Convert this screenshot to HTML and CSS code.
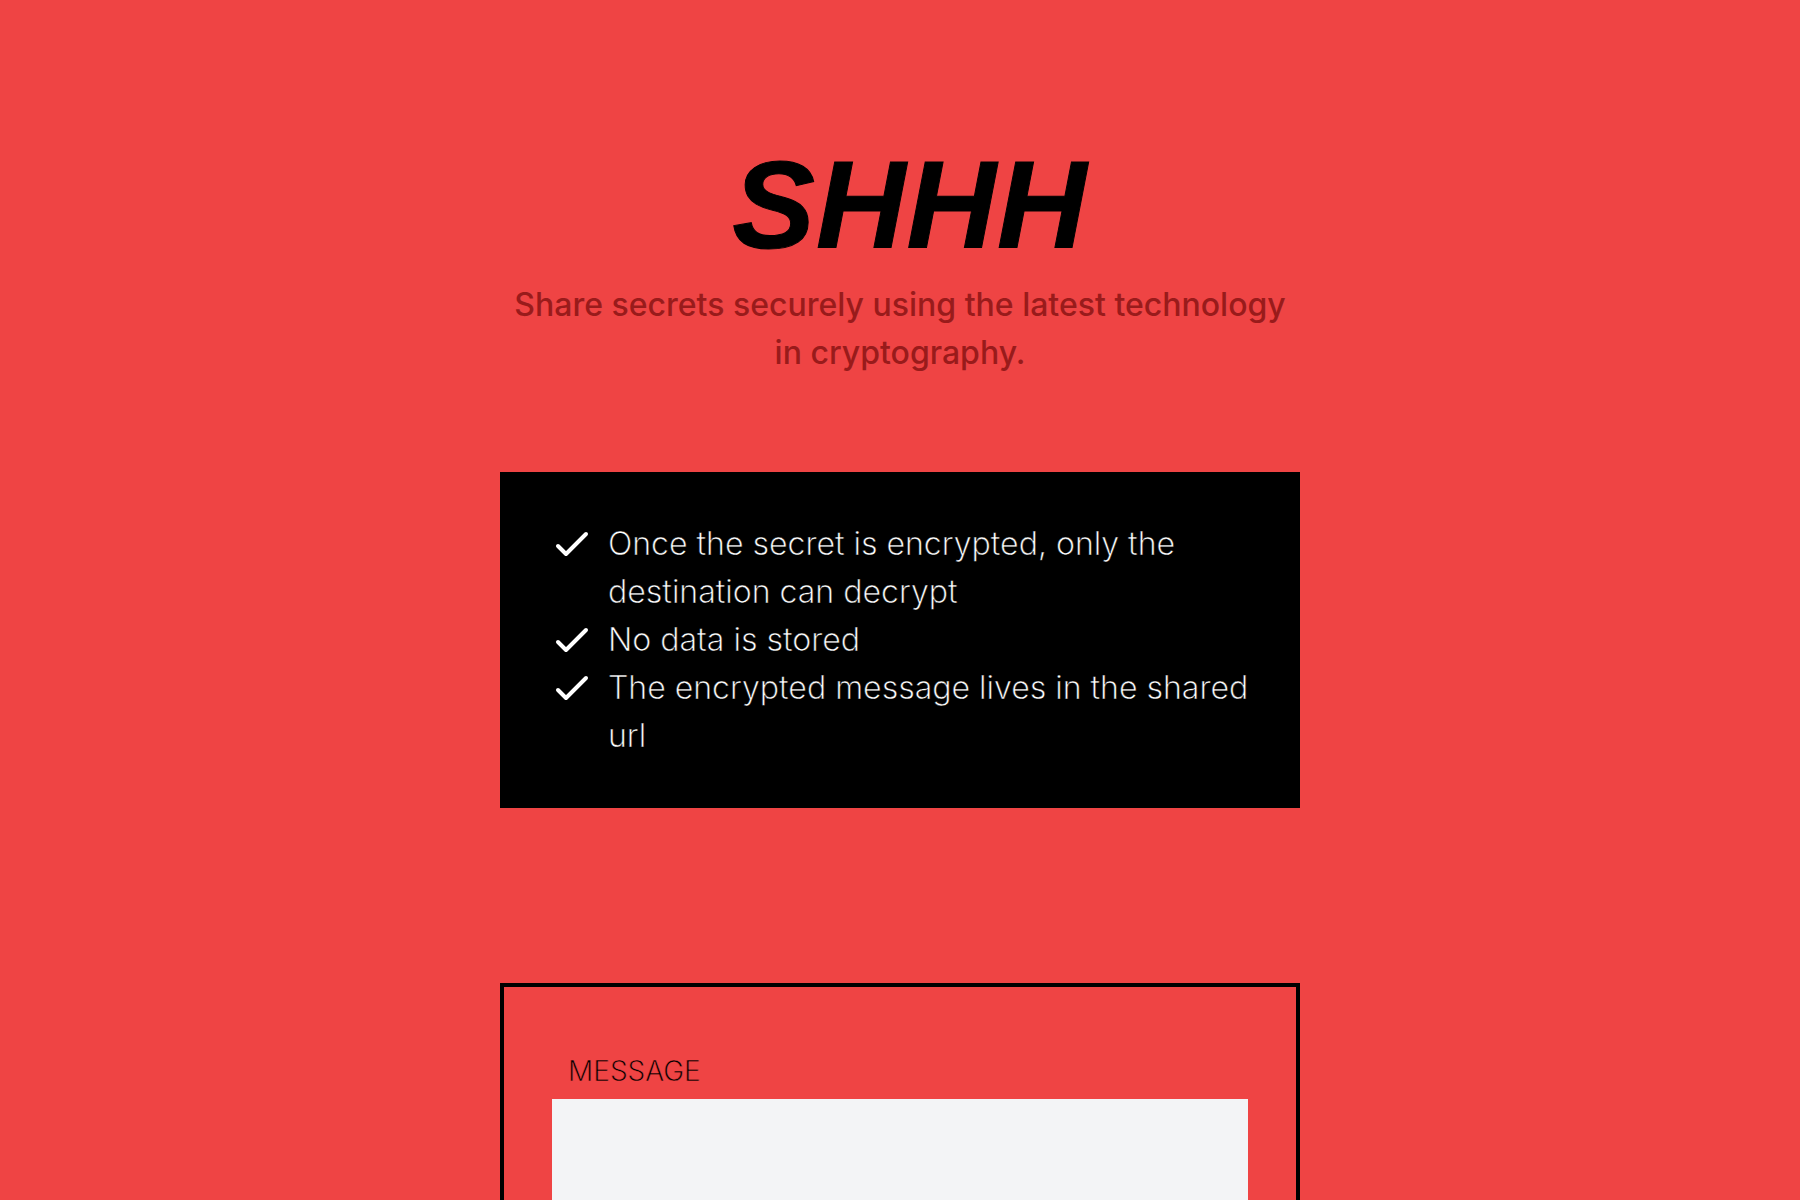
FILE: index.html
```html
<!DOCTYPE html>
<html lang="en">
<head>
<meta charset="utf-8">
<title>SHHH</title>
<link rel="stylesheet" href="styles.css">
</head>
<body>
<main class="page">
  <header class="hero">
    <h1 class="logo">SHHH</h1>
    <p class="tagline">Share secrets securely using the latest technology in cryptography.</p>
  </header>

  <section class="features">
    <ul class="feature-list">
      <li class="feature">
        <svg class="check" viewBox="0 0 24 24" fill="none" stroke="currentColor" stroke-width="2" stroke-linecap="round" stroke-linejoin="round"><path d="M5 13l4 4L19 7"/></svg>
        <span>Once the secret is encrypted, only the destination can decrypt</span>
      </li>
      <li class="feature">
        <svg class="check" viewBox="0 0 24 24" fill="none" stroke="currentColor" stroke-width="2" stroke-linecap="round" stroke-linejoin="round"><path d="M5 13l4 4L19 7"/></svg>
        <span>No data is stored</span>
      </li>
      <li class="feature">
        <svg class="check" viewBox="0 0 24 24" fill="none" stroke="currentColor" stroke-width="2" stroke-linecap="round" stroke-linejoin="round"><path d="M5 13l4 4L19 7"/></svg>
        <span>The encrypted message lives in the shared url</span>
      </li>
    </ul>
  </section>

  <form class="secret-form">
    <label class="field-label" for="message">MESSAGE</label>
    <textarea class="field-input" id="message"></textarea>
  </form>
</main>
</body>
</html>
```

FILE: styles.css
```css
html, body {
  margin: 0;
  padding: 0;
  background: #ef4444;
}

body {
  font-family: "Inter", "Liberation Sans", sans-serif;
  color: #000;
}

.page {
  width: 800px;
  margin: 0 auto;
  padding-top: 143px;
  padding-bottom: 80px;
  display: flex;
  flex-direction: column;
}

.hero {
  text-align: center;
}

.logo {
  margin: 0 0 14px 0;
  padding-left: 20px;
  font-family: "Liberation Sans", Arial, sans-serif;
  font-weight: 700;
  font-style: italic;
  font-size: 124px;
  line-height: 124px;
  letter-spacing: 1px;
  -webkit-text-stroke: 1px #000;
  color: #000;
}

.tagline {
  margin: 0;
  font-size: 32px;
  line-height: 48px;
  font-weight: 500;
  color: #991b1b;
}

.features {
  margin-top: 95px;
  background: #000;
  color: #fff;
  padding: 48px;
}

.feature-list {
  list-style: none;
  margin: 0;
  padding: 0;
}

.feature {
  display: flex;
  align-items: flex-start;
  gap: 12px;
  font-size: 32px;
  line-height: 48px;
  font-weight: 300;
  font-variation-settings: "wght" 300;
  -webkit-text-stroke: 0.4px #000;
}

.check {
  flex: 0 0 48px;
  width: 48px;
  height: 48px;
  color: #fff;
}

.secret-form {
  margin-top: 175px;
  border: 4px solid #000;
  padding: 64px 48px 48px;
  display: flex;
  flex-direction: column;
}

.field-label {
  display: block;
  padding-left: 16px;
  margin-bottom: 8px;
  font-size: 28px;
  line-height: 40px;
  font-weight: 300;
  font-variation-settings: "wght" 300;
  -webkit-text-stroke: 0.4px #ef4444;
  color: #000;
}

.field-input {
  display: block;
  box-sizing: border-box;
  width: 100%;
  height: 240px;
  border: none;
  border-radius: 0;
  background: #f3f4f6;
  resize: none;
  font-family: inherit;
  font-size: 24px;
  padding: 16px;
  outline: none;
}
```
